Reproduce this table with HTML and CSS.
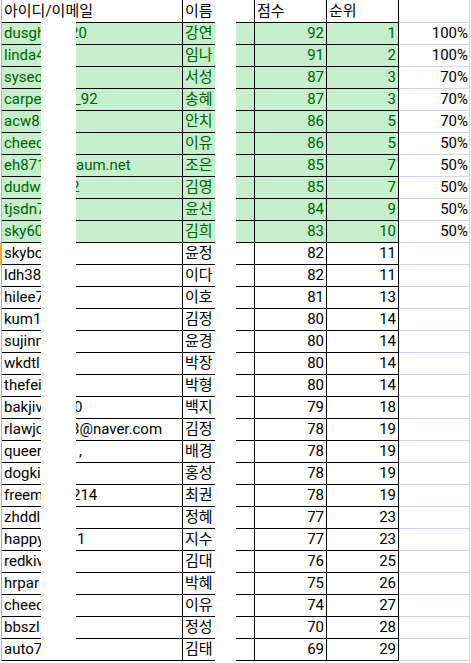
FILE: index.html
```html
<!DOCTYPE html>
<html lang="ko">
<head>
<meta charset="utf-8">
<title>점수 순위</title>
<link rel="stylesheet" href="styles.css">
</head>
<body>
<div class="sheet">
  <div class="row hdr"><i class="rh"></i><div class="c a">아이디/이메일</div><div class="c b">이름</div><div class="c cc"></div><div class="c d hl">점수</div><div class="c e hl">순위</div><div class="c f"></div></div>

  <div class="row good"><i class="rh"></i><div class="c a"><span class="pre">dusgh</span><span class="suf s0">20</span></div><div class="c b">강연</div><div class="c cc"></div><div class="c d">92</div><div class="c e">1</div><div class="c f">100%</div></div>
  <div class="row good"><i class="rh"></i><div class="c a"><span class="pre">linda4</span></div><div class="c b">임나</div><div class="c cc"></div><div class="c d">91</div><div class="c e">2</div><div class="c f">100%</div></div>
  <div class="row good"><i class="rh"></i><div class="c a"><span class="pre">syseo</span></div><div class="c b">서성</div><div class="c cc"></div><div class="c d">87</div><div class="c e">3</div><div class="c f">70%</div></div>
  <div class="row good"><i class="rh"></i><div class="c a"><span class="pre">carpe</span><span class="suf s4">_92</span></div><div class="c b">송혜</div><div class="c cc"></div><div class="c d">87</div><div class="c e">3</div><div class="c f">70%</div></div>
  <div class="row good"><i class="rh"></i><div class="c a"><span class="pre">acw85</span></div><div class="c b">안치</div><div class="c cc"></div><div class="c d">86</div><div class="c e">5</div><div class="c f">70%</div></div>
  <div class="row good"><i class="rh"></i><div class="c a"><span class="pre">cheec</span></div><div class="c b">이유</div><div class="c cc"></div><div class="c d">86</div><div class="c e">5</div><div class="c f">50%</div></div>
  <div class="row good"><i class="rh"></i><div class="c a"><span class="pre">eh871</span><span class="suf s6">aum.net</span></div><div class="c b">조은</div><div class="c cc"></div><div class="c d">85</div><div class="c e">7</div><div class="c f">50%</div></div>
  <div class="row good"><i class="rh"></i><div class="c a"><span class="pre">dudw</span><span class="suf s1">2</span></div><div class="c b">김영</div><div class="c cc"></div><div class="c d">85</div><div class="c e">7</div><div class="c f">50%</div></div>
  <div class="row good"><i class="rh"></i><div class="c a"><span class="pre">tjsdn7</span></div><div class="c b">윤선</div><div class="c cc"></div><div class="c d">84</div><div class="c e">9</div><div class="c f">50%</div></div>
  <div class="row good"><i class="rh"></i><div class="c a"><span class="pre">sky60</span></div><div class="c b">김희</div><div class="c cc"></div><div class="c d">83</div><div class="c e">10</div><div class="c f">50%</div></div>

  <div class="row sel"><i class="rh"></i><div class="c a"><span class="pre">skybo</span></div><div class="c b">윤정</div><div class="c cc"></div><div class="c d">82</div><div class="c e">11</div><div class="c f"></div></div>
  <div class="row"><i class="rh"></i><div class="c a"><span class="pre">ldh38</span></div><div class="c b">이다</div><div class="c cc"></div><div class="c d">82</div><div class="c e">11</div><div class="c f"></div></div>
  <div class="row"><i class="rh"></i><div class="c a"><span class="pre">hilee7</span></div><div class="c b">이호</div><div class="c cc"></div><div class="c d">81</div><div class="c e">13</div><div class="c f"></div></div>
  <div class="row"><i class="rh"></i><div class="c a"><span class="pre">kum1</span></div><div class="c b">김정</div><div class="c cc"></div><div class="c d">80</div><div class="c e">14</div><div class="c f"></div></div>
  <div class="row"><i class="rh"></i><div class="c a"><span class="pre">sujinn</span></div><div class="c b">윤경</div><div class="c cc"></div><div class="c d">80</div><div class="c e">14</div><div class="c f"></div></div>
  <div class="row"><i class="rh"></i><div class="c a"><span class="pre">wkdtl</span></div><div class="c b">박장</div><div class="c cc"></div><div class="c d">80</div><div class="c e">14</div><div class="c f"></div></div>
  <div class="row"><i class="rh"></i><div class="c a"><span class="pre">thefei</span></div><div class="c b">박형</div><div class="c cc"></div><div class="c d">80</div><div class="c e">14</div><div class="c f"></div></div>
  <div class="row"><i class="rh"></i><div class="c a"><span class="pre">bakjiv</span><span class="suf s4">0</span></div><div class="c b">백지</div><div class="c cc"></div><div class="c d">79</div><div class="c e">18</div><div class="c f"></div></div>
  <div class="row"><i class="rh"></i><div class="c a"><span class="pre">rlawjc</span><span class="suf s1">3@naver.com</span></div><div class="c b">김정</div><div class="c cc"></div><div class="c d">78</div><div class="c e">19</div><div class="c f"></div></div>
  <div class="row"><i class="rh"></i><div class="c a"><span class="pre">queer</span><span class="suf s9">,</span></div><div class="c b">배경</div><div class="c cc"></div><div class="c d">78</div><div class="c e">19</div><div class="c f"></div></div>
  <div class="row"><i class="rh"></i><div class="c a"><span class="pre">dogki</span></div><div class="c b">홍성</div><div class="c cc"></div><div class="c d">78</div><div class="c e">19</div><div class="c f"></div></div>
  <div class="row"><i class="rh"></i><div class="c a"><span class="pre">freem</span><span class="suf s2">214</span></div><div class="c b">최권</div><div class="c cc"></div><div class="c d">78</div><div class="c e">19</div><div class="c f"></div></div>
  <div class="row"><i class="rh"></i><div class="c a"><span class="pre">zhddl</span></div><div class="c b">정혜</div><div class="c cc"></div><div class="c d">77</div><div class="c e">23</div><div class="c f"></div></div>
  <div class="row"><i class="rh"></i><div class="c a"><span class="pre">happy</span><span class="suf s7">1</span></div><div class="c b">지수</div><div class="c cc"></div><div class="c d">77</div><div class="c e">23</div><div class="c f"></div></div>
  <div class="row"><i class="rh"></i><div class="c a"><span class="pre">redkiv</span></div><div class="c b">김대</div><div class="c cc"></div><div class="c d">76</div><div class="c e">25</div><div class="c f"></div></div>
  <div class="row"><i class="rh"></i><div class="c a"><span class="pre">hrpar</span></div><div class="c b">박혜</div><div class="c cc"></div><div class="c d">75</div><div class="c e">26</div><div class="c f"></div></div>
  <div class="row"><i class="rh"></i><div class="c a"><span class="pre">cheec</span></div><div class="c b">이유</div><div class="c cc"></div><div class="c d">74</div><div class="c e">27</div><div class="c f"></div></div>
  <div class="row"><i class="rh"></i><div class="c a"><span class="pre">bbszl</span></div><div class="c b">정성</div><div class="c cc"></div><div class="c d">70</div><div class="c e">28</div><div class="c f"></div></div>
  <div class="row"><i class="rh"></i><div class="c a"><span class="pre">auto7</span></div><div class="c b">김태</div><div class="c cc"></div><div class="c d">69</div><div class="c e">29</div><div class="c f"></div></div>

  <div class="mask m1"></div>
  <div class="mask m2"></div>
</div>
</body>
</html>
```

FILE: styles.css
```css
html, body {
  margin: 0;
  padding: 0;
  background: #ffffff;
}

body {
  font-family: Roboto, "Noto Sans CJK KR", sans-serif;
  font-size: 15px;
  color: #000000;
}

.sheet {
  position: relative;
  width: 471px;
  height: 663px;
  overflow: hidden;
}

.row {
  display: grid;
  grid-template-columns: 2px 181px 53px 19px 72px 72px 71px;
  height: 22px;
}

.row.hdr {
  height: 23px;
}

.rh {
  display: block;
  box-sizing: border-box;
  border-right: 1px solid #9eb6ce;
}

.sel .rh {
  background: #f4a43c;
  border-right-color: #f4a43c;
}

.c {
  box-sizing: border-box;
  border-bottom: 1px solid #000000;
  line-height: 21px;
  padding: 0 2px;
  white-space: nowrap;
  overflow: hidden;
}

.hdr .c {
  line-height: 22px;
}

.a,
.cc,
.d,
.e {
  border-right: 1px solid #000000;
}

.a {
  display: flex;
}

.d,
.e {
  text-align: right;
}

.hdr .hl {
  text-align: left;
}

.f {
  border-bottom-color: #d0d7e5;
  border-right: 1px solid #d0d7e5;
  text-align: right;
  padding-right: 1px;
}

.good .c:not(.f) {
  background: #c6efce;
  color: #006100;
}

.pre {
  flex: none;
  width: 66px;
  overflow: hidden;
}

.suf {
  flex: none;
}

.s0 { margin-left: 0; }
.s1 { margin-left: 1px; }
.s2 { margin-left: 2px; }
.s4 { margin-left: 4px; }
.s6 { margin-left: 6px; }
.s7 { margin-left: 7px; }
.s9 { margin-left: 9px; }

.mask {
  position: absolute;
  background: #ffffff;
}

.m1 {
  left: 41px;
  top: 22px;
  width: 35px;
  height: 637px;
}

.m2 {
  left: 215px;
  top: 0;
  width: 21px;
  height: 663px;
}
```
